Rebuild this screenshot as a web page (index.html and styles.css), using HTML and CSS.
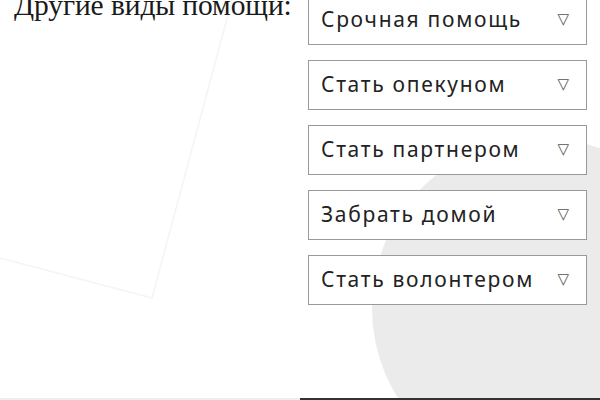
FILE: index.html
```html
<!DOCTYPE html>
<html>
  <head>
    <meta charset="utf-8" />
    <title>Другие виды помощи</title>
    <link rel="stylesheet" href="styles.css">
  </head>
  <body>
    <div id="page">
      <svg class="ghost" width="300" height="400" viewBox="0 0 300 400">
        <polyline points="0,258 152,298 232,0" fill="none" stroke="#f4f4f4" stroke-width="1.5" />
      </svg>
      <div class="blob"></div>
      <div id="wrap">
        <div id="title">Другие виды помощи:</div>
        <div id="list">
          <div class="item"><span>Срочная помощь</span><span class="arrow">▽</span></div>
          <div class="item"><span>Стать опекуном</span><span class="arrow">▽</span></div>
          <div class="item"><span>Стать партнером</span><span class="arrow">▽</span></div>
          <div class="item"><span>Забрать домой</span><span class="arrow">▽</span></div>
          <div class="item"><span>Стать волонтером</span><span class="arrow">▽</span></div>
        </div>
      </div>
      <div id="footer">
        <div class="line light"></div>
        <div class="line dark"></div>
      </div>
    </div>
  </body>
</html>
```

FILE: styles.css
```css
  body {
    margin: 0;
    background: #ffffff;
  }
  #page {
    position: relative;
    width: 600px;
    height: 400px;
    overflow: hidden;
  }
  .ghost {
    position: absolute;
    left: 0;
    top: 0;
  }
  .blob {
    position: absolute;
    left: 372px;
    top: 138px;
    width: 340px;
    height: 340px;
    border-radius: 50%;
    background: #ebebeb;
  }
  #wrap {
    position: relative;
    display: flex;
    height: 398px;
  }
  #title {
    flex: none;
    width: 308px;
    padding-left: 14px;
    margin-top: -11px;
    font-family: "Liberation Serif", serif;
    font-size: 29.5px;
    letter-spacing: -0.1px;
    color: #1a1a1a;
    box-sizing: border-box;
    white-space: nowrap;
  }
  #list {
    flex: none;
    margin-top: -5px;
    display: flex;
    flex-direction: column;
    gap: 15px;
  }
  .item {
    width: 279px;
    height: 50px;
    box-sizing: border-box;
    border: 1px solid #999999;
    background: #ffffff;
    display: flex;
    align-items: center;
    justify-content: space-between;
    padding: 0 17px 2px 12px;
    font-family: "Noto Sans", sans-serif;
    font-size: 21px;
    letter-spacing: 1.7px;
    color: #222222;
  }
  .arrow {
    font-family: "DejaVu Sans", sans-serif;
    font-size: 15px;
    letter-spacing: 0;
    color: #555555;
  }
  #footer {
    position: relative;
    display: flex;
    height: 2px;
  }
  .line {
    flex: 1;
  }
  .light {
    background: #eeeeee;
  }
  .dark {
    background: #333333;
  }
```
